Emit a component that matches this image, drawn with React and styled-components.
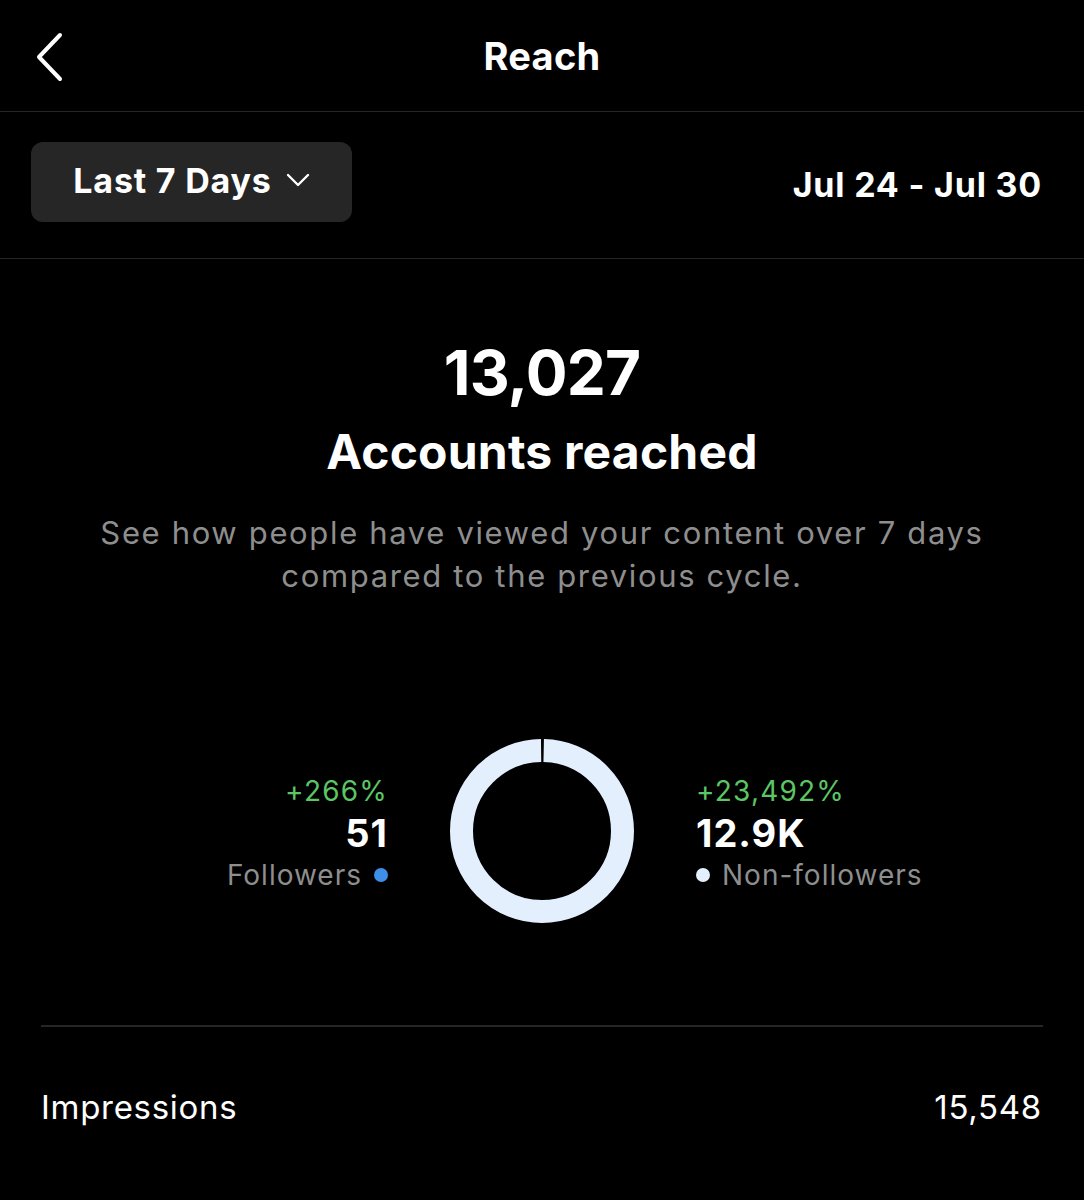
import React from "react";
import styled, { createGlobalStyle } from "styled-components";

const theme = {
    black: "#000000",
    white: "#ffffff",
    gray: "#8e8e8e",
    lineColor: "#262626",
    chipColor: "#262626",
    green: "#5cc665",
    blue: "#3d8fe8",
    ringColor: "#e3effd",
    font: "Inter, 'Noto Sans', 'Liberation Sans', sans-serif"
};

const GlobalStyle = createGlobalStyle`
    body {
        margin: 0;
        padding: 0;
        background-color: ${theme.black};
        font-family: ${theme.font};
        -webkit-font-smoothing: antialiased;
    }
`;

const Page = styled.div`
    width: 1084px;
    min-height: 1200px;
    background-color: ${theme.black};
    color: ${theme.white};
`;

const Header = styled.header`
    position: relative;
    height: 111px;
    display: flex;
    align-items: center;
    justify-content: center;
    border-bottom: 1px solid ${theme.lineColor};
`;

const BackButton = styled.button`
    position: absolute;
    left: 26px;
    top: 27px;
    width: 44px;
    height: 60px;
    padding: 0;
    border: none;
    background: none;
    display: grid;
    place-items: center;
`;

const Title = styled.h1`
    margin: 0;
    font-size: 38px;
    font-weight: 700;
    letter-spacing: 0.3px;
`;

const FilterRow = styled.div`
    display: flex;
    align-items: center;
    justify-content: space-between;
    padding: 30px 42px 36px 31px;
    border-bottom: 1px solid ${theme.lineColor};
`;

const RangeButton = styled.button`
    height: 80px;
    width: 321px;
    border: none;
    border-radius: 12px;
    background-color: ${theme.chipColor};
    color: ${theme.white};
    font-family: ${theme.font};
    font-size: 34px;
    font-weight: 700;
    letter-spacing: 0.8px;
    display: flex;
    align-items: center;
    justify-content: center;
    gap: 14px;
    padding: 0 0 4px 0;
`;

const DateText = styled.div`
    font-size: 34px;
    font-weight: 700;
    letter-spacing: 0.8px;
    padding-top: 4px;
`;

const Hero = styled.section`
    display: flex;
    flex-direction: column;
    align-items: center;
    padding-top: 77px;
    text-align: center;
`;

const BigNumber = styled.div`
    font-size: 62px;
    line-height: 74px;
    font-weight: 700;
    letter-spacing: -0.8px;
`;

const HeroLabel = styled.div`
    margin-top: 13px;
    font-size: 48px;
    line-height: 58px;
    font-weight: 700;
    letter-spacing: 0.2px;
`;

const Description = styled.p`
    margin: 30px 0 0 0;
    width: 980px;
    font-size: 31px;
    line-height: 43px;
    letter-spacing: 1.65px;
    color: ${theme.gray};
`;

const Breakdown = styled.div`
    display: grid;
    grid-template-columns: 1fr 184px 1fr;
    column-gap: 62px;
    align-items: center;
    margin-top: 142px;
`;

const Legend = styled.div`
    display: flex;
    flex-direction: column;
    padding-top: 4px;
    align-items: ${props => props.align === "right" ? "flex-end" : "flex-start"};
    text-align: ${props => props.align === "right" ? "right" : "left"};
`;

const Change = styled.div`
    font-size: 28px;
    line-height: 42px;
    letter-spacing: 1.2px;
    color: ${theme.green};
`;

const Count = styled.div`
    font-size: 38px;
    line-height: 42px;
    font-weight: 700;
    letter-spacing: 1px;
`;

const LegendLabel = styled.div`
    display: flex;
    align-items: center;
    gap: 12px;
    font-size: 28px;
    line-height: 42px;
    letter-spacing: 1px;
    color: ${theme.gray};
`;

const Dot = styled.span`
    width: 14px;
    height: 14px;
    border-radius: 50%;
    background-color: ${props => props.color};
`;

const Divider = styled.hr`
    margin: 102px 41px 0 41px;
    border: none;
    height: 2px;
    background-color: ${theme.lineColor};
`;

const StatRow = styled.div`
    display: flex;
    align-items: center;
    justify-content: space-between;
    padding: 0 42px 0 41px;
    height: 160px;
    font-size: 33px;
    letter-spacing: 0.7px;
`;

function Donut({ followers, total }) {
    const size = 184;
    const stroke = 23;
    const r = (size - stroke) / 2;
    const c = 2 * Math.PI * r;
    // the followers slice is so thin it only shows as a notch
    const notch = Math.max((followers / total) * c, 1) + 1.5;
    return (
        <svg width={size} height={size} viewBox={`0 0 ${size} ${size}`}>
            <g transform={`rotate(-90 ${size / 2} ${size / 2})`}>
                <circle
                    cx={size / 2}
                    cy={size / 2}
                    r={r}
                    fill="none"
                    stroke={theme.ringColor}
                    strokeWidth={stroke}
                    strokeDasharray={`${c - notch} ${c}`}
                    strokeDashoffset={-notch / 2}
                />
            </g>
        </svg>
    );
}

export default function App() {
    return (
        <Page>
            <GlobalStyle />
            <Header>
                <BackButton aria-label="Back">
                    <svg width="32" height="50" viewBox="0 0 32 50">
                        <path d="M28 3 L7 25 L28 47" fill="none" stroke="#fff" strokeWidth="4" strokeLinecap="round" strokeLinejoin="round" />
                    </svg>
                </BackButton>
                <Title>Reach</Title>
            </Header>

            <FilterRow>
                <RangeButton>
                    Last 7 Days
                    <svg width="24" height="14" viewBox="0 0 24 14">
                        <path d="M2 2 L12 12 L22 2" fill="none" stroke="#fff" strokeWidth="2.4" strokeLinecap="round" strokeLinejoin="round" />
                    </svg>
                </RangeButton>
                <DateText>Jul 24 - Jul 30</DateText>
            </FilterRow>

            <Hero>
                <BigNumber>13,027</BigNumber>
                <HeroLabel>Accounts reached</HeroLabel>
                <Description>
                    See how people have viewed your content over 7 days<br />
                    compared to the previous cycle.
                </Description>
            </Hero>

            <Breakdown>
                <Legend align="right">
                    <Change>+266%</Change>
                    <Count>51</Count>
                    <LegendLabel>Followers <Dot color={theme.blue} /></LegendLabel>
                </Legend>
                <Donut followers={51} total={13027} />
                <Legend align="left">
                    <Change>+23,492%</Change>
                    <Count>12.9K</Count>
                    <LegendLabel><Dot color={theme.ringColor} /> Non-followers</LegendLabel>
                </Legend>
            </Breakdown>

            <Divider />

            <StatRow>
                <span>Impressions</span>
                <span>15,548</span>
            </StatRow>
        </Page>
    );
}
